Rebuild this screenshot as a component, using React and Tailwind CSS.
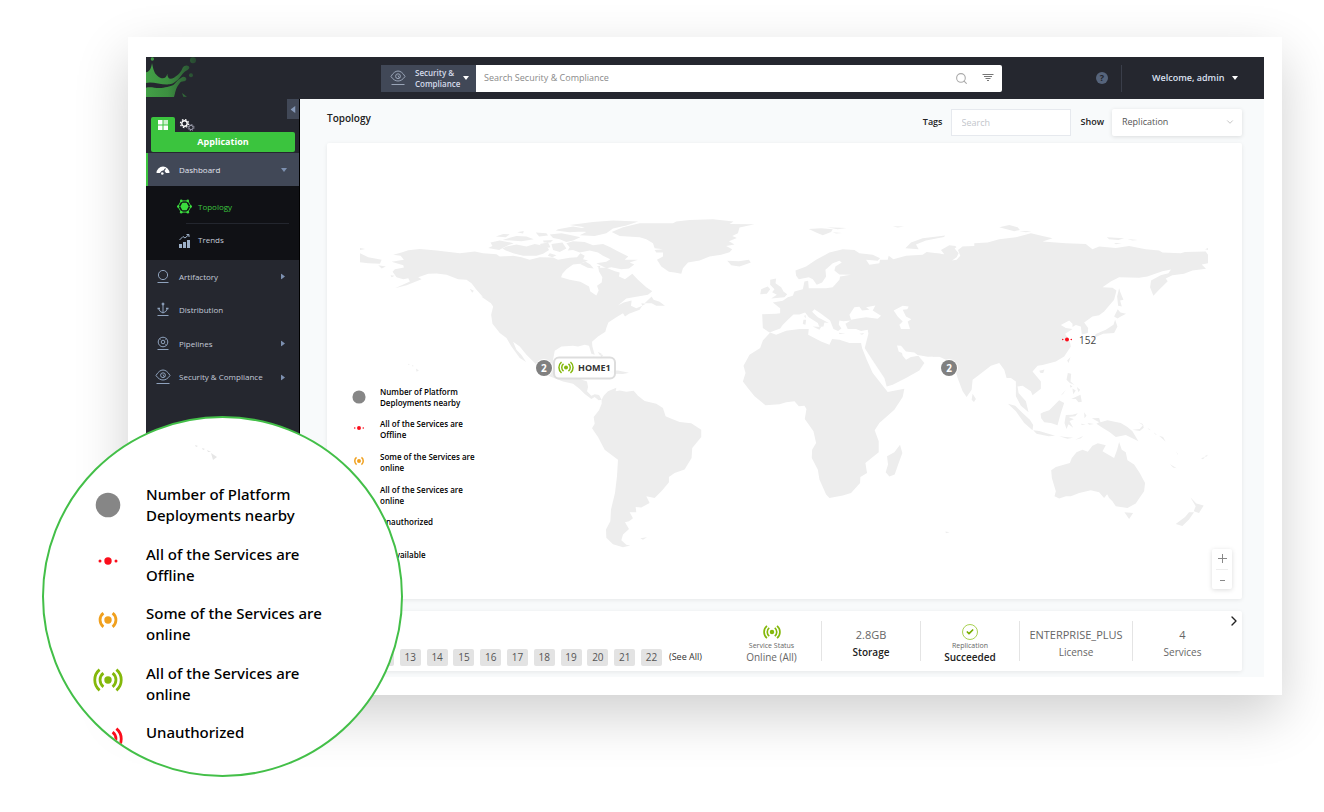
import { useState } from 'react';
import clsx from 'clsx';
import { Search, Check, ChevronRight, ChevronDown } from 'lucide-react';

const LEGEND = [
  { kind: 'nearby', label: 'Number of Platform Deployments nearby' },
  { kind: 'offline', label: 'All of the Services are Offline' },
  { kind: 'partial', label: 'Some of the Services are online' },
  { kind: 'online', label: 'All of the Services are online' },
  { kind: 'unauthorized', label: 'Unauthorized' },
  { kind: 'unavailable', label: 'Unavailable' },
];

const DEPLOYMENTS = [12, 13, 14, 15, 16, 17, 18, 19, 20, 21, 22];

const COLORS = {
  nearby: '#868686',
  offline: '#fb0d1b',
  partial: '#f0a01e',
  online: '#84b80b',
  unauthorized: '#fb0d1b',
  unavailable: '#868686',
};

function StatusIcon({ kind, className }) {
  const color = COLORS[kind];
  const inner = kind !== 'nearby' && kind !== 'offline';
  const outer = kind === 'online' || kind === 'unauthorized';

  return (
    <svg viewBox="-15 -13 30 26" className={className} fill={color} aria-hidden="true">
      <circle r={kind === 'nearby' ? 12.3 : 3.7} />
      {kind === 'offline' && (
        <>
          <circle cx="-8" r="1.5" />
          <circle cx="8" r="1.5" />
        </>
      )}
      <g fill="none" stroke={color} strokeWidth="2.8">
        {inner && <path d="M-4.6-6.8A8.6 8.6 0 0 0-4.6 6.8M4.6-6.8A8.6 8.6 0 0 1 4.6 6.8" />}
        {outer && <path d="M-8.4-10.3A13.4 13.4 0 0 0-8.4 10.3M8.4-10.3A13.4 13.4 0 0 1 8.4 10.3" />}
      </g>
    </svg>
  );
}

function Legend() {
  return (
    <ul className="grid h-[196px] grid-rows-6 text-[8px] leading-[11px] font-semibold text-black">
      {LEGEND.map(({ kind, label }) => (
        <li key={kind} className="flex items-start gap-[13px]">
          <StatusIcon kind={kind} className={clsx('h-[14px] w-4', kind === 'nearby' ? 'mt-1' : 'mt-[3px]')} />
          <span className="w-[100px]">{label}</span>
        </li>
      ))}
    </ul>
  );
}

function MagnifiedLegend() {
  return (
    <ul className="grid h-[298px] grid-rows-5 font-['Noto_Sans','Open_Sans',sans-serif] text-[15px] leading-[21px] font-medium text-black">
      {LEGEND.slice(0, 5).map(({ kind, label }) => (
        <li key={kind} className="flex items-start gap-[23px]">
          <StatusIcon kind={kind} className={clsx('h-[26px] w-[30px]', kind === 'nearby' ? 'mt-2' : 'mt-1')} />
          <span className="w-[180px]">{label}</span>
        </li>
      ))}
    </ul>
  );
}

function Logo() {
  return (
    <svg viewBox="78 80 150 120" className="h-10 w-[50px]" role="img" aria-label="Logo">
      <defs>
        <linearGradient id="splash" x1="78" y1="0" x2="225" y2="0" gradientUnits="userSpaceOnUse">
          <stop offset="0" stopColor="#43a047" />
          <stop offset=".45" stopColor="#3c8f40" />
          <stop offset="1" stopColor="#284a32" />
        </linearGradient>
      </defs>
      <g fill="url(#splash)">
        <circle cx="97" cy="86" r="5" />
        <path d="M78 126C90 124 94 112 96 98C100 116 102 128 112 136C126 148 138 146 142 130C142 142 148 150 162 142C180 130 184 122 188 112C194 102 208 104 208 112C206 120 196 120 188 130C174 150 162 160 148 162C122 164 96 152 78 158Z" />
        <path d="M78 172C96 168 110 176 130 172C146 169 160 168 168 156C174 148 178 146 184 142C192 136 202 142 198 150C192 156 184 150 178 160C166 174 166 188 162 200L78 200Z" />
        <circle cx="219" cy="90" r="9" />
        <circle cx="213" cy="135" r="6" />
        <path d="M186 188L194 194L201 200L190 199Z" />
      </g>
    </svg>
  );
}

function WorldMap() {
  return (
    <svg viewBox="0 0 916 456" className="block h-auto w-full" fill="#ededed" role="img" aria-label="World map">
      {/* Americas */}
      <g transform="translate(13 57) scale(.3333)">
        <path d="M160 165L185 158L205 151L240 147L290 152L360 160L405 155L430 160L470 163L480 170L520 168L545 172L570 180L600 172L640 173L655 180L690 174L712 172L722 160L735 168L730 178L745 182L722 192L700 194L680 208L668 222L664 232L690 240L722 246L748 260L752 275L770 287L777 272L772 258L786 248L788 232L778 215L776 204L800 204L826 214L840 218L838 230L856 238L878 222L895 240L920 262L938 274L925 285L890 291L860 296L835 317L852 308L876 302L874 318L890 325L908 318L900 330L868 342L856 350L850 340L830 352L806 368L800 385L797 396L775 410L757 426L758 440L765 465L755 462L748 438L735 435L715 440L700 438L665 440L645 453L640 480L650 515L672 526L690 522L702 506L718 505L712 535L742 545L745 562L742 575L755 588L765 584L778 586L786 600L777 602L765 592L755 598L735 583L720 568L700 552L670 545L625 528L600 510L585 490L560 465L540 440L520 426L530 450L545 466L559 487L540 475L528 458L515 440L500 415L480 400L458 372L454 345L460 320L450 305L430 292L410 270L395 250L380 240L355 238L320 225L290 221L265 222L235 232L245 238L200 256L165 265L210 245L205 235L190 238L170 232L158 216L165 208L192 203L190 196L155 186L192 180L182 168Z" />
        <path d="M786 600L792 588L805 575L830 564L828 575L840 572L860 576L882 573L895 588L915 604L950 612L970 625L978 650L990 655L1020 667L1055 671L1085 690L1085 712L1058 745L1056 775L1035 810L1005 820L988 832L988 848L968 872L945 895L920 890L930 910L905 924L888 922L890 938L870 938L880 956L868 965L856 968L868 988L850 1005L845 1022L860 1036L872 1038L850 1043L820 1034L800 1015L799 990L812 965L814 930L826 880L832 830L835 780L795 750L775 712L757 686L765 672L762 652L778 632L786 612Z" />
        <path d="M690 75L760 66L820 62L896 65L860 77L820 86L800 100L765 108L720 106L740 96L700 90L735 82ZM655 88L700 80L735 86L730 95L690 97L648 92ZM630 104L665 100L695 106L722 112L700 122L680 126L660 118L640 114ZM500 140L530 134L560 140L585 132L622 140L628 150L610 162L590 168L550 168L520 160L498 152L488 146ZM452 128L480 122L522 130L500 138L478 150L445 144L458 138ZM468 110L490 102L510 103L498 112ZM488 120L530 108L560 110L582 118L545 124ZM532 97L552 93L550 101ZM588 98L620 100L625 107L598 110ZM600 132L625 128L632 142L612 146ZM610 122L640 120L632 128L612 128ZM680 130L700 124L735 126L760 136L790 132L812 142L830 152L866 170L855 180L895 180L870 188L884 194L868 206L845 208L815 202L800 205L770 190L800 186L812 178L790 168L775 158L750 152L720 158L700 150L684 152L690 142ZM635 132L668 128L680 146L660 156L640 150ZM720 192L738 186L752 194L762 206L744 204ZM772 200L782 198L780 206ZM630 160L650 166L638 172L624 168ZM915 310L936 290L942 300L960 306L976 318L950 318L936 310ZM905 310L918 312L908 318Z" />
        <path d="M60 160L85 172L125 180L120 192L85 190L60 187ZM60 144L76 147L60 150ZM115 196L138 200L125 206ZM152 226L164 228L155 232ZM424 290L445 294L468 315L450 308ZM390 267L402 273L397 279ZM228 506L237 512L230 516ZM204 492L210 494L206 496ZM216 496L222 499L218 500ZM902 1016L922 1013L910 1021ZM758 470L800 478L815 500L790 492ZM800 514L835 512L868 519L850 523L820 522ZM774 456L786 462L780 466ZM780 462L790 466L786 474Z" />
      </g>

      {/* Europe and Africa */}
      <g transform="translate(313 57) scale(.3333)">
        <path d="M-84 96L-50 82L0 70L100 70L110 65L150 60L220 58L282 65L270 72L345 73L300 83L295 100L278 108L292 114L268 124L285 134L260 138L278 148L270 157L245 165L210 170L180 182L145 188L130 205L125 222L105 218L88 216L65 200L52 180L70 170L70 158L50 158L45 150L70 148L45 145L40 130L20 118L0 112L-60 108Z" />
        <path d="M468 212L500 200L530 180L570 158L610 148L645 150L660 160L700 165L722 175L715 183L680 180L690 195L720 190L722 180L745 180L748 168L762 178L800 168L850 165L862 156L905 162L905 470L865 471L835 466L855 490L840 512L800 535L760 555L742 560L735 535L715 505L695 475L676 445L680 430L687 402L685 390L665 394L650 388L625 388L618 372L634 362L612 364L600 362L598 374L606 386L596 394L582 388L572 362L545 342L525 328L518 336L535 352L568 370L555 368L552 380L540 382L535 370L508 352L497 338L480 344L462 344L445 360L430 375L422 386L390 398L370 385L368 343L410 342L422 340L422 325L400 308L430 303L445 292L460 288L465 275L490 268L495 245L506 243L508 265L560 265L580 262L600 240L602 230L635 225L600 224L585 212L588 200L607 188L600 183L580 190L558 210L560 230L548 248L532 255L520 238L508 232L478 238L470 228Z" />
        <path d="M392 398L410 405L440 393L480 388L508 388L506 405L545 425L570 435L578 418L600 420L630 430L665 430L668 445L682 480L700 520L738 568L745 577L795 567L790 592L765 630L720 670L706 692L718 725L718 758L678 790L683 820L663 832L662 850L635 880L610 888L570 895L560 885L540 840L535 810L517 775L518 750L530 730L522 695L496 658L501 628L495 618L478 620L465 605L440 608L420 614L378 617L345 590L325 565L310 545L318 520L312 498L330 465L362 445L370 422Z" />
        <path d="M392 240L410 236L408 250L425 262L432 275L443 283L435 292L395 296L412 285L398 277L405 268L392 255ZM365 268L385 260L392 268L382 282L362 283ZM263 183L298 184L328 180L334 188L300 200L275 196ZM508 87L545 85L580 88L575 96L550 106L530 98ZM562 82L622 84L595 88ZM580 97L608 99L590 101ZM798 145L815 128L850 115L918 107L914 111L860 122L830 134L838 148ZM760 79L795 80L775 83ZM782 735L789 760L778 790L766 825L750 831L739 818L746 795L743 770L765 758ZM492 360L500 360L498 375L490 373ZM494 348L499 346L498 356ZM520 380L545 382L540 390ZM598 399L618 401L600 403ZM660 402L675 400L668 405Z" />
        <path
          fill="#fff"
          d="M630 345L645 322L660 321L668 332L690 330L680 322L708 317L700 332L725 348L715 357L680 352L655 356L635 360ZM763 332L790 318L808 320L804 328L790 330L800 350L816 358L805 365L812 388L785 388L780 375L790 365L775 350ZM773 437L785 438L800 455L825 458L838 468L815 472L800 480L790 468L788 460L778 455Z"
        />
      </g>

      {/* Asia and Oceania */}
      <g transform="translate(573 57) scale(.3333)">
        <path d="M100 160L135 163L125 150L150 136L168 138L176 146L185 140L225 138L225 130L265 128L300 118L350 112L395 100L430 108L460 115L430 125L500 130L560 132L580 148L600 140L650 144L690 138L740 148L780 152L790 158L845 160L858 156L920 155L927 165L927 190L908 194L921 207L880 212L855 222L820 226L800 236L806 244L780 270L763 288L753 262L756 242L785 226L808 220L816 209L790 214L745 230L720 234L660 232L635 245L610 262L640 264L652 272L645 300L615 335L600 346L580 350L555 368L567 385L566 400L548 404L545 380L530 376L520 382L520 372L510 362L485 376L500 385L520 388L498 402L512 425L515 440L495 470L470 485L430 496L415 498L400 515L425 545L425 567L400 587L395 575L370 558L355 560L358 580L380 605L388 638L365 618L350 590L350 545L335 535L322 535L315 510L300 490L275 498L240 525L220 540L217 570L202 592L190 575L175 535L165 500L140 480L120 471L100 471Z" />
        <path d="M220 582L230 598L224 607L217 600ZM420 513L436 509L432 520L424 520ZM504 482L514 472L508 490ZM660 265L664 278L673 300L663 302L668 320L657 318L654 290ZM656 328L664 338L681 342L665 350L655 356L645 350ZM648 360L655 380L645 400L612 402L585 414L590 403L620 390L643 375ZM578 414L592 418L584 424ZM300 82L330 75L355 82L362 90L345 94ZM360 93L397 94L380 97ZM623 112L675 115L658 120L630 118ZM645 129L668 130L650 133ZM685 117L716 120L700 122ZM918 148L927 144L927 150Z" />
        <path d="M326 612L348 618L370 640L392 660L402 676L400 692L375 670L350 635ZM402 692L420 694L440 700L468 708L448 710L412 702ZM480 710L500 712L522 714L505 717ZM528 720L552 709L545 716ZM424 642L432 638L450 632L480 602L495 610L485 640L475 677L455 670L435 668L426 656ZM500 646L520 645L536 641L528 650L508 652L524 659L511 664L522 684L508 674L502 688L496 670ZM506 520L516 522L514 545L526 556L512 550L502 540ZM484 588L500 570L492 582ZM512 555L520 560L514 564ZM520 566L530 572L522 584ZM533 562L543 570L538 578ZM516 598L544 585L548 606L538 608L530 598ZM555 638L562 648L556 656ZM545 672L560 674L548 676ZM565 670L585 673L570 675ZM578 656L600 655L604 668L625 662L665 670L685 682L700 695L718 725L700 716L680 706L650 712L632 698L610 684L592 672L600 668ZM700 690L722 688L732 676L734 684L722 694ZM718 668L734 678L730 672ZM745 684L755 692L750 690ZM764 698L774 706L768 704ZM780 708L800 726L792 712ZM832 755L838 767L834 762ZM812 793L833 806L822 804ZM906 776L918 772L912 779ZM916 770L927 765L922 771Z" />
        <path d="M456 812L470 802L512 790L518 775L532 758L550 750L566 756L580 738L596 731L620 737L610 755L645 775L654 750L660 727L668 750L680 758L685 782L705 795L722 820L738 850L735 875L718 900L710 912L685 925L650 920L640 905L630 895L624 884L615 895L600 878L575 872L540 880L515 890L500 890L480 897L466 890L470 875L458 835ZM676 938L702 940L690 958ZM874 893L892 912L914 918L900 940L884 935L890 920ZM885 938L870 960L850 979L830 973L858 952L870 938ZM138 996L151 998L140 1001Z" />
        <path fill="#fff" d="M180 135L166 146L178 160L172 172L158 182L172 180L183 168L176 150L190 140Z" />
      </g>
    </svg>
  );
}

function EyeIcon({ className }) {
  return (
    <svg viewBox="0 0 16 16" className={className} fill="none" stroke="currentColor" aria-hidden="true">
      <path d="M1 6.5C5-.8 11-.8 15 6.5C11 12.5 5 12.5 1 6.5Z" />
      <circle cx="8" cy="6.2" r="2.4" />
      <path d="M8 5.5L9.5 8M1.5 14.5H14.5" />
    </svg>
  );
}

function NavIcon({ name }) {
  if (name === 'security') return <EyeIcon className="h-4 w-4" />;
  return (
    <svg viewBox="0 0 16 16" className="h-4 w-4" fill="none" stroke="currentColor" aria-hidden="true">
      {name === 'artifactory' && <circle cx="8" cy="6" r="4.6" />}
      {name === 'distribution' && (
        <>
          <path d="M8 2.5V11M3.5 6.5Q4.5 10 8 11Q11.5 10 12.5 6.5" />
          <circle cx="8" cy="2" r="1" fill="currentColor" />
          <path d="M2.5 6.5H5M11 6.5H13.5" strokeWidth="1.5" />
        </>
      )}
      {name === 'pipelines' && (
        <>
          <circle cx="8" cy="6" r="4.8" />
          <circle cx="8" cy="6" r="1.8" />
          <path d="M4.5 2.5L5.5 3.5M11.5 2.5L10.5 3.5M11.5 9.5L10.5 8.5" />
        </>
      )}
      <path d="M2.5 13.5H13.5" />
    </svg>
  );
}

function Caret({ className }) {
  return (
    <svg viewBox="0 0 6 4" className={className} fill="currentColor" aria-hidden="true">
      <path d="M0 0H6L3 4Z" />
    </svg>
  );
}

function TopBar() {
  return (
    <header className="flex h-[42px] items-center bg-[#25272f]">
      <div className="h-full w-[235px] shrink-0">
        <Logo />
      </div>
      <button type="button" className="flex h-[27px] w-[95px] shrink-0 items-center bg-[#414857] pl-2 text-left text-[8px] leading-[11px] font-semibold text-[#d5dbea]">
        <EyeIcon className="mr-2 h-4 w-[18px] text-[#9aa5b8]" />
        <span className="w-12">Security &amp; Compliance</span>
        <Caret className="h-1 w-1.5 text-white" />
      </button>
      <div className="flex h-[27px] flex-1 items-center gap-3.5 rounded-r-xs bg-white px-2">
        <input
          type="search"
          aria-label="Search Security & Compliance"
          placeholder="Search Security & Compliance"
          className="min-w-0 flex-1 text-[9px] outline-none placeholder:text-[#8a8a8a]"
        />
        <Search className="h-[13px] w-[13px] text-[#aaa]" strokeWidth={2} />
        <svg viewBox="0 0 12 10" className="h-2.5 w-3" stroke="#777" aria-hidden="true">
          <path d="M.5 1.5H11.5M2 3.5H10M3.5 5.5H8.5M5 7.5H7" />
        </svg>
      </div>
      <div className="flex h-full w-[262px] shrink-0 items-center">
        <button type="button" aria-label="Help" className="ml-[94px] h-3 w-3 rounded-full bg-[#56647b] text-[9px] leading-3 font-bold text-[#20232b]">
          ?
        </button>
        <span className="ml-[13px] h-[27px] w-px bg-[#3a3e4a]" />
        <button type="button" className="ml-[30px] flex items-center gap-2 text-[9px] font-semibold whitespace-nowrap text-[#dbe1f1]">
          Welcome, admin
          <Caret className="h-1 w-1.5 text-white" />
        </button>
      </div>
    </header>
  );
}

function NavItem({ icon, label, expandable }) {
  return (
    <a href="#" className="flex items-center pr-[13px] pl-[9px] text-[8px] text-[#c3cad9]">
      <span className="mr-2 text-[#8fa2bd]">
        <NavIcon name={icon} />
      </span>
      <span className="flex-1">{label}</span>
      {expandable && <Caret className="h-[5px] w-1.5 -rotate-90 text-[#7d90b0]" />}
    </a>
  );
}

function Sidebar() {
  return (
    <aside className="w-[154px] shrink-0 border-r border-black bg-[#25272f]">
      <div className="flex h-[18px] justify-end">
        <button type="button" aria-label="Collapse menu" className="flex h-5 w-3 items-center justify-center bg-[#414857]">
          <Caret className="h-[5px] w-2 rotate-90 text-[#8497b7]" />
        </button>
      </div>
      <div className="mr-1 ml-[5px]">
        <div className="flex">
          <button type="button" aria-label="Application" className="flex h-[15px] w-6 items-center justify-center rounded-t-xs bg-[#3bc43e]">
            <svg viewBox="0 0 10 10" className="h-2.5 w-2.5" fill="#fff" aria-hidden="true">
              <path d="M0 0H4.5V4.5H0ZM5.5 5.5H10V10H5.5ZM0 5.5H4.5V10H0Z" />
              <path opacity=".75" d="M5.5 0H10V4.5H5.5Z" />
            </svg>
          </button>
          <button type="button" aria-label="Administration" className="ml-1">
            <svg viewBox="0 0 16 14" className="h-3.5 w-4" fill="none" aria-hidden="true">
              <circle cx="5.5" cy="5.5" r="2.7" stroke="#fff" strokeWidth="1.4" />
              <circle cx="5.5" cy="5.5" r="4" stroke="#fff" strokeWidth="1.3" strokeDasharray="1.57 1.57" />
              <circle cx="12" cy="9.5" r="2.1" stroke="#aab" strokeWidth=".9" />
              <circle cx="12" cy="9.5" r="3" stroke="#aab" strokeDasharray="1.2 1.16" />
            </svg>
          </button>
        </div>
        <div className="h-5 rounded-xs rounded-tl-none bg-[#3bc43e] text-center text-[9px] leading-5 font-bold text-white">Application</div>
      </div>
      <nav className="mt-px">
        <a href="#" className="flex h-[33px] items-center border-l-2 border-[#3bc43e] bg-[#414857] pr-3 pl-2 text-[8px] text-[#e1e5ee]">
          <svg viewBox="0 0 14 12" className="mr-[9px] h-3 w-3.5" aria-hidden="true">
            <path fill="#fff" d="M.5 9A6.5 6.5 0 0 1 13.5 9L10 9Q9 6.5 7 6.5Q5 6.5 4 9Z" />
            <path stroke="#414857" strokeWidth="1.2" d="M6 9.5L9.5 4.5" />
            <circle cx="6.3" cy="9.5" r="1.3" fill="#fff" />
          </svg>
          <span className="flex-1">Dashboard</span>
          <Caret className="h-1 w-1.5 text-[#7d90b0]" />
        </a>
        <div className="flex h-[74px] flex-col bg-[#101115] pr-2.5 pl-[31px] text-[8px]">
          <a href="#" className="flex h-[37px] items-center gap-[6px] pt-1 text-[#3bc43e]">
            <svg viewBox="0 0 16 16" className="h-[15px] w-[15px]" fill="#3bdc3e" stroke="#3bdc3e" aria-hidden="true">
              <path fill="none" d="M4.5 2H11.5L15 8L11.5 14H4.5L1 8Z" />
              <path stroke="none" d="M5.7 4H10.3L12.5 8L10.3 12H5.7L3.5 8Z" />
              <g stroke="none">
                <circle cx="4.5" cy="2" r="1.4" />
                <circle cx="11.5" cy="2" r="1.4" />
                <circle cx="14.7" cy="8" r="1.3" />
                <circle cx="11.5" cy="14" r="1.4" />
                <circle cx="4.5" cy="14" r="1.4" />
                <circle cx="1.3" cy="8" r="1.3" />
              </g>
            </svg>
            Topology
          </a>
          <span className="ml-[9px] h-px bg-[#23262e]" />
          <a href="#" className="flex h-8 items-center gap-[6px] text-[#c3cad9]">
            <svg viewBox="0 0 15 15" className="h-[15px] w-[15px]" fill="#9db0c8" aria-hidden="true">
              <path d="M2 11H5V15H2ZM6 9H9V15H6ZM10 7H13V15H10Z" />
              <path fill="none" stroke="#9db0c8" d="M2.5 7L6 3.5L8 5L12 1.5M9.5 1.5H12V4" />
            </svg>
            Trends
          </a>
        </div>
        <div className="grid h-[134px] grid-rows-4">
          <NavItem icon="artifactory" label="Artifactory" expandable />
          <NavItem icon="distribution" label="Distribution" />
          <NavItem icon="pipelines" label="Pipelines" expandable />
          <NavItem icon="security" label="Security & Compliance" expandable />
        </div>
      </nav>
    </aside>
  );
}

function CountMarker({ count, className }) {
  return (
    <button
      type="button"
      className={clsx(
        'absolute h-4 w-4 -translate-x-1/2 -translate-y-1/2 rounded-full bg-[#808080] text-[10px] leading-4 font-bold text-white ring-1 ring-white',
        className,
      )}
    >
      {count}
    </button>
  );
}

function TopologyMap() {
  return (
    <section className="relative rounded-xs bg-white shadow-[0_1px_4px_rgba(0,0,0,0.08)]">
      <WorldMap />
      <CountMarker count={2} className="top-[49.3%] left-[23.7%]" />
      <CountMarker count={2} className="top-[49.3%] left-[68%]" />
      <button
        type="button"
        className="absolute top-[49.3%] left-[24.7%] flex h-[23px] -translate-y-1/2 items-center gap-1 rounded-md border-2 border-[#ddd] bg-white/90 px-[3px] text-[9px] font-bold text-[#333]"
      >
        <StatusIcon kind="online" className="h-[14px] w-4" />
        HOME1
      </button>
      <div className="absolute top-[43.2%] left-[80%] flex -translate-y-1/2 items-center gap-1 text-[10px] text-[#444]">
        <StatusIcon kind="offline" className="h-[14px] w-4" />
        152
      </div>
      <div className="absolute bottom-[17px] left-6">
        <Legend />
      </div>
      <div className="absolute right-2.5 bottom-2.5 flex w-5 flex-col items-center rounded-xs bg-white text-[#888] shadow-[0_1px_5px_rgba(0,0,0,0.14)]">
        <button type="button" aria-label="Zoom in" className="flex h-5 items-center">
          <svg viewBox="0 0 9 9" className="h-[9px] w-[9px]" stroke="currentColor" aria-hidden="true">
            <path d="M0 4.5H9M4.5 0V9" />
          </svg>
        </button>
        <span className="h-px w-3 bg-[#eee]" />
        <button type="button" aria-label="Zoom out" className="flex h-[19px] items-center">
          <svg viewBox="0 0 9 9" className="h-[9px] w-[9px]" stroke="currentColor" aria-hidden="true">
            <path d="M2 5.5H7" />
          </svg>
        </button>
      </div>
    </section>
  );
}

function Stat({ className, children }) {
  return <div className={clsx('flex h-10 flex-col items-center', className)}>{children}</div>;
}

function SummaryBar() {
  return (
    <section className="relative mt-3 flex h-[60px] items-center rounded-xs bg-white pr-2.5 shadow-[0_1px_4px_rgba(0,0,0,0.08)]">
      <div className="mt-[33px] ml-[46px] flex w-[289px] justify-between text-[10px] text-[#555]">
        {DEPLOYMENTS.map((n) => (
          <button type="button" key={n} className="h-[17px] w-[21px] rounded-xs bg-[#e3e3e3]">
            {n}
          </button>
        ))}
      </div>
      <a href="#" className="mt-[33px] ml-[7px] flex-1 text-[9px] text-[#333]">
        (See All)
      </a>
      <Stat className="w-[99px] pt-[3px] text-[#666]">
        <StatusIcon kind="online" className="h-4 w-[18px] shrink-0" />
        <span className="mt-px text-[7px] leading-[10px]">Service Status</span>
        <span className="text-[10px] leading-3">Online (All)</span>
      </Stat>
      <Stat className="w-[99px] gap-px border-l border-[#e4e4e4] pt-1.5 text-[#666]">
        <span className="text-[11px] leading-4">2.8GB</span>
        <span className="text-[10px] leading-4 font-semibold text-[#222]">Storage</span>
      </Stat>
      <Stat className="w-[100px] border-x border-[#e4e4e4] pt-[3px] text-[#666]">
        <span className="flex h-4 w-4 shrink-0 items-center justify-center rounded-full border border-[#a9d152]">
          <Check className="h-2 w-2 text-[#76ac00]" strokeWidth={5} />
        </span>
        <span className="mt-px text-[7px] leading-[10px]">Replication</span>
        <span className="text-[10px] leading-3 font-semibold text-[#222]">Succeeded</span>
      </Stat>
      <Stat className="w-[113px] gap-px border-r border-[#e4e4e4] pt-1.5 text-[#666]">
        <span className="text-[11px] leading-4">ENTERPRISE_PLUS</span>
        <span className="text-[10px] leading-4">License</span>
      </Stat>
      <Stat className="w-[99px] gap-px pt-1.5 text-[#666]">
        <span className="text-[11px] leading-4">4</span>
        <span className="text-[10px] leading-4">Services</span>
      </Stat>
      <button type="button" aria-label="Next" className="absolute top-0.5 right-0">
        <ChevronRight className="h-4 w-4 text-[#222]" strokeWidth={2} />
      </button>
    </section>
  );
}

export default function App() {
  const [show, setShow] = useState('Replication');

  return (
    <div className="relative min-h-screen bg-white pt-[37px] pr-[42px] pb-[117px] pl-32 font-['Open_Sans',sans-serif]">
      <div className="bg-white p-[18px] pt-5 shadow-[0_20px_50px_rgba(0,0,0,0.19)]">
        <TopBar />
        <div className="flex">
          <Sidebar />
          <main className="min-w-0 flex-1 bg-[#f8fafb] pr-[22px] pb-1.5 pl-[27px]">
            <div className="flex h-11 items-center pt-0.5 text-[9px]">
              <h1 className="mb-2 flex-1 text-[10px] font-semibold text-[#222]">Topology</h1>
              <label htmlFor="tags" className="mr-2 font-semibold text-[#222]">
                Tags
              </label>
              <input
                id="tags"
                placeholder="Search"
                className="mr-2.5 h-[27px] w-[120px] border border-[#e6e9ee] bg-white px-2.5 outline-none placeholder:text-[#c3c6cb]"
              />
              <label htmlFor="show" className="mr-2 font-semibold text-[#222]">
                Show
              </label>
              <div className="relative">
                <select
                  id="show"
                  value={show}
                  onChange={(e) => setShow(e.target.value)}
                  className="h-[27px] w-[130px] appearance-none rounded-xs bg-white px-2.5 text-[#555] shadow-[0_1px_4px_rgba(0,0,0,0.12)] outline-none"
                >
                  <option>Replication</option>
                </select>
                <ChevronDown className="pointer-events-none absolute top-2 right-[7px] h-2.5 w-2.5 text-[#bbb]" />
              </div>
            </div>
            <TopologyMap />
            <SummaryBar />
          </main>
        </div>
      </div>

      {/* magnified legend */}
      <div className="absolute top-[416px] left-[42px] h-[361px] w-[361px] overflow-hidden rounded-full border-2 border-[#43bf48] bg-white pt-[66px] pl-[49px]">
        <svg viewBox="0 0 24 16" className="absolute top-[26px] left-[150px] h-4 w-6" fill="#e6e6e6" aria-hidden="true">
          <path d="M1 1L4 2L2 3ZM8 4L11 5L9 6ZM13 6L17 8L14 8ZM17 9L23 13L19 16Z" />
        </svg>
        <MagnifiedLegend />
      </div>
    </div>
  );
}
